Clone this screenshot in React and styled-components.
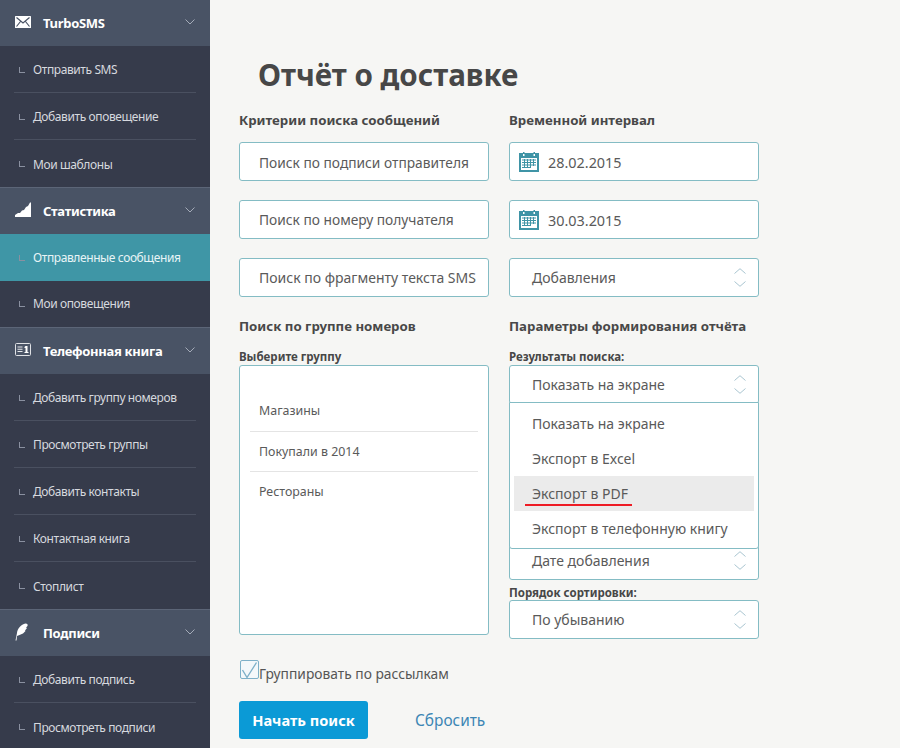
import React from "react";
import styled, { createGlobalStyle } from "styled-components";

const Global = createGlobalStyle`
  html, body { margin: 0; padding: 0; height: 100%; overflow: hidden; background: #f6f6f4; }
  * { box-sizing: border-box; }
  body { font-family: "Noto Sans", "Open Sans", sans-serif; color: #555; }
`;

const Page = styled.div`
  display: flex;
  width: 900px;
  height: 748px;
  overflow: hidden;
`;
const Sidebar = styled.nav`
  flex: 0 0 210px;
  width: 210px;
  background: #363b4b;
  display: flex;
  flex-direction: column;
`;
const GroupHeader = styled.div`
  flex: none;
  height: ${p => (p.$first ? 46 : 47)}px;
  display: flex;
  align-items: center;
  background: #495365;
  border-top: ${p => (p.$first ? "none" : "1px solid #5c6577")};
  padding-left: 15px;
  color: #fff;
  font-size: 13px;
  letter-spacing: -0.3px;
  font-weight: 700;
`;
const HeaderIcon = styled.span`
  width: 28px;
  display: flex;
  align-items: center;
  color: #fff;
  margin-bottom: 3px;
`;
const HeaderChevron = styled.span`
  margin-left: auto;
  margin-right: 15px;
  display: flex;
  color: #a4abb8;
  margin-bottom: 3px;
`;
const NavItem = styled.a`
  flex: none;
  height: ${p => (p.$short ? 46 : 47)}px;
  display: flex;
  align-items: center;
  font-size: 12px;
  letter-spacing: -0.4px;
  color: ${p => (p.$active ? "#e8f4f6" : "#d6d9df")};
  background: ${p => (p.$active ? "#3f96a6" : "transparent")};
  padding: 0 14px;
`;
const NavInner = styled.span`
  flex: 1;
  height: 100%;
  display: flex;
  align-items: center;
  padding-left: 5px;
  padding-top: ${p => (p.$nudge ? 1 : 0)}px;
  padding-bottom: ${p => (p.$lift ? 1 : 0)}px;
  border-bottom: ${p => (p.$line ? "1px solid #4a5060" : "none")};
`;
const Elbow = styled.span`
  width: 6px;
  height: 6px;
  margin-right: 8px;
  border-left: 1px solid #8a90a0;
  border-bottom: 1px solid #8a90a0;
`;
const Main = styled.main`
  flex: 1;
  padding: 54px 0 0 29px;
`;
const Title = styled.h1`
  margin: 0 0 14px 19px;
  font-size: 29.6px;
  line-height: 42px;
  font-weight: 700;
  color: #474747;
`;
const Columns = styled.div`
  display: grid;
  grid-template-columns: 250px 250px;
  column-gap: 20px;
`;
const Column = styled.div`
  display: flex;
  flex-direction: column;
`;
const Heading = styled.h2`
  margin: ${p => (p.$second ? "19px" : "0")} 0 ${p => (p.$second ? 14 : 12)}px;
  font-size: 13.25px;
  line-height: 20px;
  font-weight: 700;
  color: #484848;
`;
const FieldLabel = styled.div`
  margin: ${p => p.$top || 0}px 0 ${p => p.$bottom ?? 1}px;
  font-size: 11.5px;
  line-height: 14px;
  font-weight: 700;
  color: #474747;
`;
const Field = styled.div`
  height: 39px;
  margin-bottom: ${p => p.$gap ?? 19}px;
  display: flex;
  align-items: center;
  padding-left: ${p => p.$pad ?? 19}px;
  background: #fff;
  border: 1px solid #84bcc4;
  border-radius: 3px;
  font-size: ${p => p.$size ?? 14}px;
  color: #5a5a5a;
  position: relative;
  flex: none;
`;
const FieldText = styled.span`
  padding-top: ${p => p.$drop ?? 1}px;
`;
const CalendarWrap = styled.span`
  display: flex;
  margin-right: 9px;
`;
const Arrows = styled.span`
  position: absolute;
  right: 12px;
  top: 9px;
  display: flex;
  flex-direction: column;
  gap: 7px;
  color: #a9c5d0;
`;
const ListBox = styled.div`
  height: 270px;
  padding: 26px 10px 0;
  background: #fff;
  border: 1px solid #84bcc4;
  border-radius: 3px;
`;
const ListItem = styled.div`
  height: 40px;
  padding-left: 9px;
  padding-bottom: ${p => (p.$first ? 3 : 1)}px;
  display: flex;
  align-items: center;
  font-size: 12.4px;
  color: #5a5a5a;
  border-bottom: ${p => (p.$line ? "1px solid #e4e4e4" : "none")};
`;
const ResultsBlock = styled.div`
  position: relative;
  height: 176px;
`;
const Dropdown = styled.div`
  position: absolute;
  z-index: 2;
  left: 0;
  right: 0;
  top: 37px;
  height: 147px;
  padding: 3px 4px;
  background: #fff;
  border: 1px solid #84bcc4;
  border-radius: 0 0 3px 3px;
`;
const Option = styled.div`
  position: relative;
  height: 35px;
  padding-left: 18px;
  display: flex;
  align-items: center;
  font-size: 14px;
  color: #5a5a5a;
  background: ${p => (p.$hot ? "#ebebeb" : "transparent")};
`;
const RedLine = styled.span`
  position: absolute;
  left: 11px;
  top: 28px;
  width: 107px;
  height: 2px;
  background: #ee1c25;
`;
const CheckRow = styled.label`
  margin-top: 21px;
  height: 20px;
  display: flex;
  align-items: flex-start;
  font-size: 13.8px;
  color: #555;
  line-height: 18px;
`;
const CheckText = styled.span`
  margin-top: 5px;
`;
const CheckBox = styled.span`
  width: 19px;
  height: 19px;
  margin-left: 0.5px;
  margin-right: 0.5px;
  border: 1px solid #7eb0c8;
  border-radius: 2px;
  background: #f4f8fa;
  display: flex;
  position: relative;
`;
const CheckMark = styled.svg`
  position: absolute;
  left: -1px;
  top: -1px;
`;
const Actions = styled.div`
  margin-top: 21px;
  display: flex;
  align-items: center;
`;
const Primary = styled.button`
  width: 129px;
  height: 38px;
  border: none;
  border-radius: 3px;
  background: #0b9ad6;
  color: #fff;
  font-family: inherit;
  font-size: 14.6px;
  font-weight: 700;
  padding: 0;
`;
const Reset = styled.a`
  margin-left: 47px;
  font-size: 15.4px;
  color: #3d86b4;
`;

const Envelope = () => (
  <svg width="16" height="12" viewBox="0 0 16 12"><rect width="16" height="12" rx="0.5" fill="#fff" /><path d="M1.5 1.5L8 7L14.5 1.5M1.5 10.5L5.5 5.5M14.5 10.5L10.5 5.5" fill="none" stroke="#495365" strokeWidth="1.2" /></svg>
);
const AreaChart = () => (
  <svg width="16" height="15" viewBox="0 0 16 15"><path d="M0 15V13L3 11L5 11L7 8.5L9 8L11 5L13 4L15 0.5H16V15Z" fill="#fff" /></svg>
);
const IdCard = () => (
  <svg width="16" height="13" viewBox="0 0 16 13"><rect x="0.5" y="0.5" width="15" height="12" rx="1" fill="#4b5567" stroke="#dfe1e5" /><path d="M2.5 3.5h5v1h-5zM2.5 5.7h5v1h-5zM2.5 8h5v1h-5z" fill="#e6e8ec" /><path d="M10.5 3h2v6h1v1h-4V9h1V5h-1V4z" fill="#fff" /></svg>
);
const Feather = () => (
  <svg width="13" height="18" viewBox="0 0 13 18"><path d="M0.5 17.5L2 10C2.5 5.5 6 1.5 10.5 0.5C12.5 0.5 13 1.5 12.5 3L11 4.5L12 5L10 7.5L10.5 8L8 10.5L4.5 12L2 13L1.5 17.5Z" fill="#fff" /></svg>
);
const Chevron = () => (
  <svg width="10" height="6" viewBox="0 0 10 6"><path d="M0.5 0.5L5 5L9.5 0.5" fill="none" stroke="currentColor" /></svg>
);
const Up = () => (
  <svg width="12" height="6" viewBox="0 0 12 6"><path d="M0.5 5.5L6 0.7L11.5 5.5" fill="none" stroke="currentColor" /></svg>
);
const Down = () => (
  <svg width="12" height="6" viewBox="0 0 12 6"><path d="M0.5 0.5L6 5.3L11.5 0.5" fill="none" stroke="currentColor" /></svg>
);
const Calendar = () => (
  <svg width="20" height="20" viewBox="0 0 20 20">
    <rect y="1" width="20" height="19" fill="#3f94a6" />
    <rect x="4" width="1.5" height="3" fill="#3f94a6" />
    <rect x="14.5" width="1.5" height="3" fill="#3f94a6" />
    <rect x="4" y="2" width="1.5" height="2" fill="#fff" />
    <rect x="14.5" y="2" width="1.5" height="2" fill="#fff" />
    <rect x="2" y="6" width="16" height="12" fill="#fff" />
    <path d="M3 7.5h14v1H3zM3 10h14v1H3zM3 12.5h14v1H3zM3 15h9v1H3z" fill="#3f94a6" />
    <path d="M5 7v9h1V7zM8 7v9h1V7zM11 7v9h1V7zM14 7v7h1V7z" fill="#3f94a6" />
  </svg>
);

const Sel = ({ children, gap }) => (
  <Field $pad={22} $gap={gap}>
    <FieldText $drop={0}>{children}</FieldText>
    <Arrows><Up /><Down /></Arrows>
  </Field>
);

const nav = [
  { icon: <Envelope />, title: "TurboSMS", items: ["Отправить SMS", "Добавить оповещение", "Мои шаблоны"] },
  { icon: <AreaChart />, title: "Статистика", items: ["Отправленные сообщения", "Мои оповещения"], active: 0 },
  { icon: <IdCard />, title: "Телефонная книга", items: ["Добавить группу номеров", "Просмотреть группы", "Добавить контакты", "Контактная книга", "Стоплист"] },
  { icon: <Feather />, title: "Подписи", items: ["Добавить подпись", "Просмотреть подписи"] },
];

export default function App() {
  return (
    <Page>
      <Global />
      <Sidebar>
        {nav.map((g, gi) => (
          <React.Fragment key={g.title}>
            <GroupHeader $first={gi === 0}>
              <HeaderIcon>{g.icon}</HeaderIcon>
              {g.title}
              <HeaderChevron><Chevron /></HeaderChevron>
            </GroupHeader>
            {g.items.map((it, i) => {
              const inActiveGroup = g.active !== undefined;
              return (
                <NavItem key={it} $active={g.active === i} $short={inActiveGroup && i === 1}>
                  <NavInner $nudge={!inActiveGroup} $lift={inActiveGroup && i === 1} $line={i < g.items.length - 1 && !inActiveGroup}>
                    <Elbow />{it}
                  </NavInner>
                </NavItem>
              );
            })}
          </React.Fragment>
        ))}
      </Sidebar>
      <Main>
        <Title>Отчёт о доставке</Title>
        <Columns>
          <Column>
            <Heading>Критерии поиска сообщений</Heading>
            <Field $size={13.75}><FieldText>Поиск по подписи отправителя</FieldText></Field>
            <Field $size={13.75}><FieldText $drop={0}>Поиск по номеру получателя</FieldText></Field>
            <Field $size={14} $gap={0}><FieldText $drop={0}>Поиск по фрагменту текста SMS</FieldText></Field>
            <Heading $second>Поиск по группе номеров</Heading>
            <FieldLabel>Выберите группу</FieldLabel>
            <ListBox>
              <ListItem $line $first>Магазины</ListItem>
              <ListItem $line>Покупали в 2014</ListItem>
              <ListItem>Рестораны</ListItem>
            </ListBox>
          </Column>
          <Column>
            <Heading>Временной интервал</Heading>
            <Field $pad={9} $size={14.4}><CalendarWrap><Calendar /></CalendarWrap><FieldText>28.02.2015</FieldText></Field>
            <Field $pad={9} $size={14.4}><CalendarWrap><Calendar /></CalendarWrap><FieldText>30.03.2015</FieldText></Field>
            <Sel gap={0}>Добавления</Sel>
            <Heading $second>Параметры формирования отчёта</Heading>
            <FieldLabel>Результаты поиска:</FieldLabel>
            <ResultsBlock>
              <Sel gap={0}>Показать на экране</Sel>
              <Dropdown>
                <Option>Показать на экране</Option>
                <Option>Экспорт в Excel</Option>
                <Option $hot>Экспорт в PDF<RedLine /></Option>
                <Option>Экспорт в телефонную книгу</Option>
              </Dropdown>
            </ResultsBlock>
            <Sel gap={0}>Дате добавления</Sel>
            <FieldLabel $top={6} $bottom={0}>Порядок сортировки:</FieldLabel>
            <Sel gap={0}>По убыванию</Sel>
          </Column>
        </Columns>
        <CheckRow>
          <CheckBox>
            <CheckMark width="19" height="19" viewBox="0 0 19 19"><path d="M2.5 10L7 17.5L16.5 2.5" fill="none" stroke="#7eb0c8" strokeWidth="1.4" /></CheckMark>
          </CheckBox>
          <CheckText>Группировать по рассылкам</CheckText>
        </CheckRow>
        <Actions>
          <Primary>Начать поиск</Primary>
          <Reset>Сбросить</Reset>
        </Actions>
      </Main>
    </Page>
  );
}
